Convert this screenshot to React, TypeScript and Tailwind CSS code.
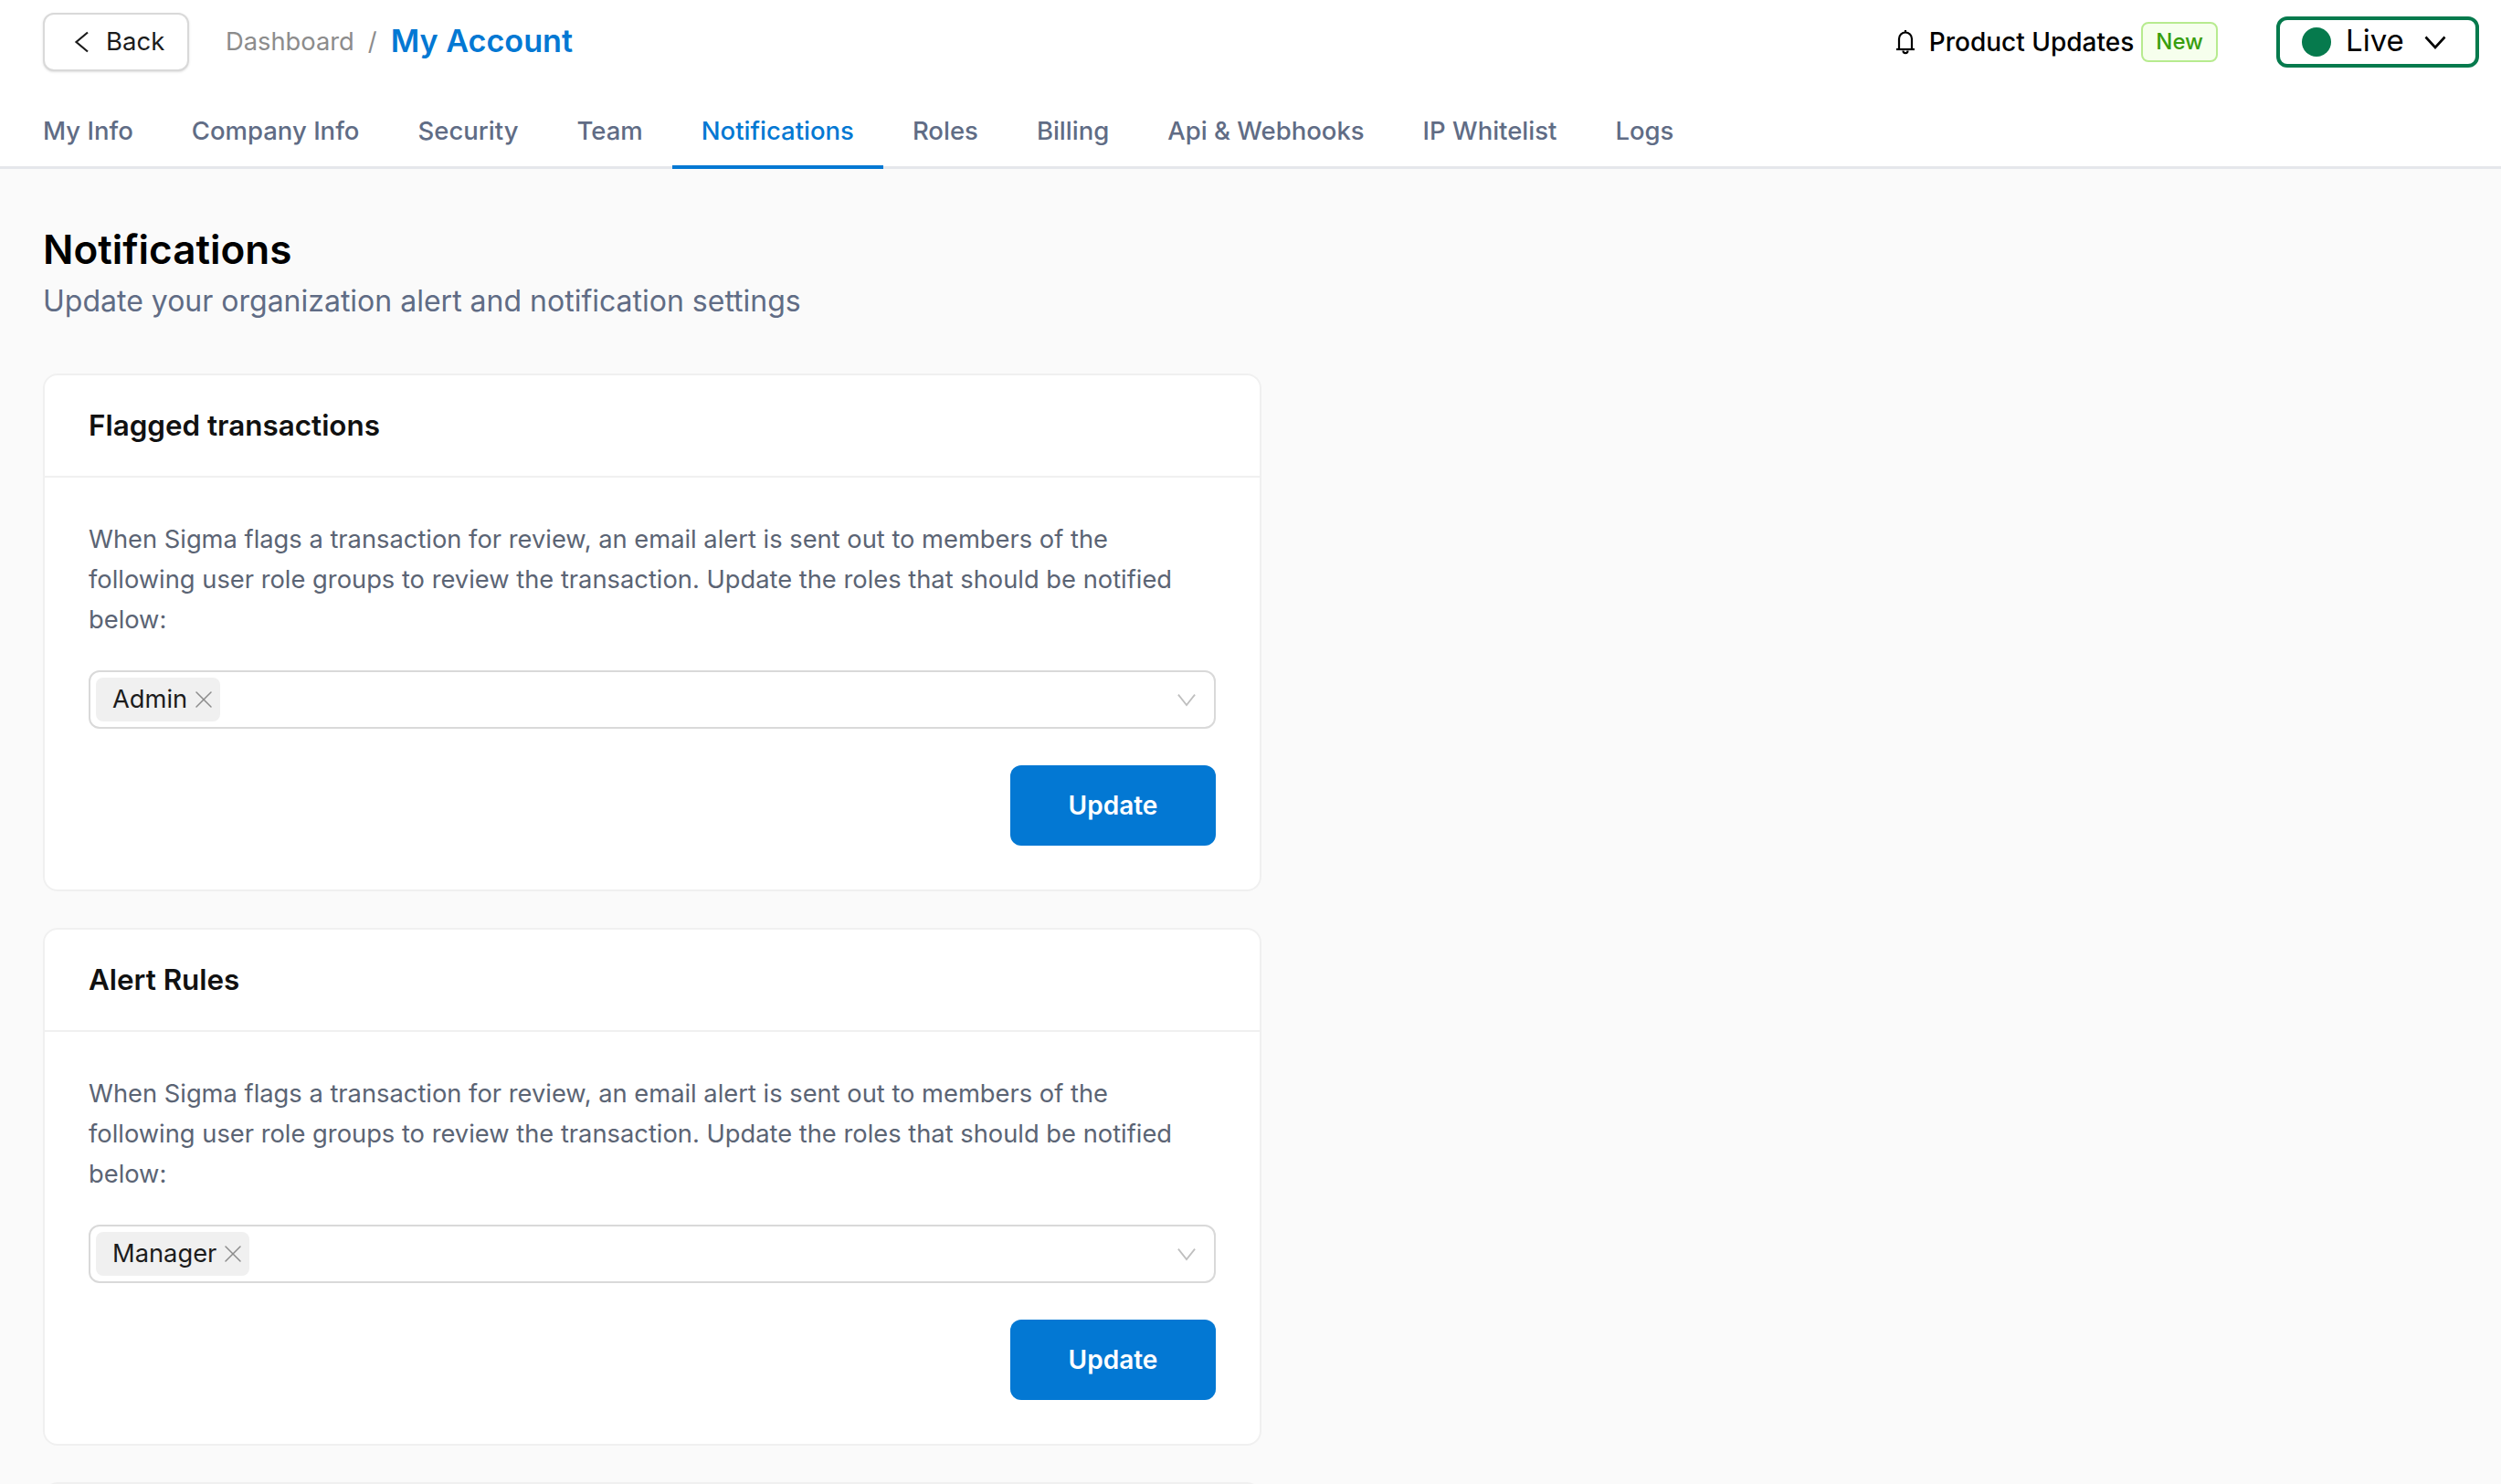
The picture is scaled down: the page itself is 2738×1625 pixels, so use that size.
import { X } from "lucide-react";

const tabs = ["My Info", "Company Info", "Security", "Team", "Notifications", "Roles", "Billing", "Api & Webhooks", "IP Whitelist", "Logs"];

const copy =
  "When Sigma flags a transaction for review, an email alert is sent out to members of the following user role groups to review the transaction. Update the roles that should be notified below:";

function SettingsCard({ title, role }: { title: string; role: string }) {
  return (
    <section className="w-[1334px] rounded-2xl border-2 border-[#f0f0f0] bg-white">
      <h2 className="flex h-[112px] items-center border-b-2 border-[#f0f0f0] px-[48px] text-[31.4px] font-semibold text-[#111]">{title}</h2>
      <div className="px-[48px] pt-[46px] pb-[48px]">
        <p className="text-[27.3px] leading-[44px] text-[#5b6474]">{copy}</p>
        <div className="mt-[33px] flex h-[64px] items-center justify-between rounded-xl border-2 border-[#d9d9d9] pr-[20px] pl-[6px]">
          <span className="flex h-[48px] items-center gap-[2px] rounded-lg bg-[#f0f0f0] pr-[2px] pl-[18px] text-[27.3px] text-[#1c1c1c]">
            {role}
            <X className="size-[32px] text-[#8c8c8c]" strokeWidth={1.1} />
          </span>
          <svg width="20" height="15" viewBox="0 0 22 16" fill="none" stroke="#bfbfbf" strokeWidth="2">
            <path d="M1 1.5 11 14 21 1.5" />
          </svg>
        </div>
        <div className="mt-[40px] flex justify-end">
          <button className="h-[88px] w-[225px] rounded-xl bg-[#0378d3] text-[28px] font-semibold text-white">Update</button>
        </div>
      </div>
    </section>
  );
}

export default function App() {
  return (
    <div className="h-screen overflow-hidden bg-[#fafafa] font-['Inter',sans-serif]">
      <header className="border-b-[3px] border-[#e5e7eb] bg-white">
        <div className="flex h-[123px] items-start justify-between pt-[14px] pr-[24px] pl-[47px]">
          <div className="flex items-center">
            <button className="flex h-[64px] w-[160px] items-center gap-[18px] rounded-xl border-2 border-[#d9d9d9] bg-white pl-[32px] text-[27.5px] text-[#1c1c1c] shadow-sm">
              <svg width="17" height="24" viewBox="0 0 17 24" fill="none" stroke="#1c1c1c" strokeWidth="2.2">
                <path d="M15 1.5 2.5 12 15 22.5" />
              </svg>
              Back
            </button>
            <span className="ml-[40px] text-[27.3px] text-[#8c8c8c]">Dashboard</span>
            <span className="mx-[15px] text-[27.3px] text-[#8c8c8c]">/</span>
            <span className="-mt-[2px] text-[34.2px] font-semibold text-[#0378d3]">My Account</span>
          </div>
          <div className="flex h-[64px] items-center">
            <svg width="22" height="28" viewBox="0 0 22 28" fill="none" stroke="#000" strokeWidth="2.2">
              <path d="M4 21V10.5a7 7 0 0 1 14 0V21" />
              <path d="M1 22h20" />
              <path d="M11 1v2.5M8.5 23.5c0 3.5 5 3.5 5 0" />
            </svg>
            <span className="ml-[15px] text-[28px] font-medium text-black">Product Updates</span>
            <span className="ml-[8px] flex h-[44px] items-center rounded-lg border-2 border-[#b7eb8f] bg-[#f6ffed] px-[14px] text-[24px] font-medium text-[#389e0d]">New</span>
            <button className="ml-[64px] flex h-[56px] w-[222px] items-center rounded-xl border-4 border-[#067a4d] pl-[24px] text-[33px] text-black">
              <span className="size-[32px] rounded-full bg-[#067a4d]" />
              <span className="ml-[16px] -mt-[2px]">Live</span>
              <svg className="ml-[22px]" width="24" height="15" viewBox="0 0 24 15" fill="none" stroke="#000" strokeWidth="2.6">
                <path d="M1.5 1.5 12 13 22.5 1.5" />
              </svg>
            </button>
          </div>
        </div>
        <nav className="flex pl-[15px]">
          {tabs.map((tab) => (
            <a
              key={tab}
              className={
                tab === "Notifications"
                  ? "-mb-[3px] border-b-[4px] border-[#0378d3] px-[32px] pb-[17px] text-[27.5px] font-medium text-[#0378d3]"
                  : "-mb-[3px] border-b-[4px] border-transparent px-[32px] pb-[17px] text-[27.5px] font-medium text-[#606c85]"
              }
            >
              {tab}
            </a>
          ))}
        </nav>
      </header>
      <main className="pt-[60px] pl-[47px]">
        <h1 className="text-[44px] leading-[56px] font-semibold text-black">Notifications</h1>
        <p className="mt-[4px] text-[32px] leading-[50px] text-[#606c85]">Update your organization alert and notification settings</p>
        <div className="mt-[54px] flex flex-col gap-[40px]">
          <SettingsCard title="Flagged transactions" role="Admin" />
          <SettingsCard title="Alert Rules" role="Manager" />
          <section className="h-[200px] w-[1334px] rounded-2xl border-2 border-[#f0f0f0] bg-white" />
        </div>
      </main>
    </div>
  );
}
